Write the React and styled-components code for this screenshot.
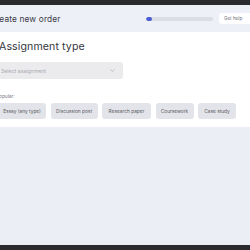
import React from "react";
import styled, { createGlobalStyle } from "styled-components";

const Global = createGlobalStyle`
  html, body { margin: 0; padding: 0; background: #eceef6; }
  body { font-family: Inter, "Noto Sans", Arial, sans-serif; overflow: hidden; }
  * { box-sizing: border-box; }
`;

const Page = styled.div`
  width: 250px;
  height: 250px;
  display: flex;
  flex-direction: column;
  overflow: hidden;
  background: #eceef6;
`;

const DarkBar = styled.div`
  height: ${(p) => p.$h}px;
  background: #2b2b2d;
  flex: none;
`;

const Header = styled.header`
  height: 27px;
  flex: none;
  background: #eef0f8;
  display: flex;
  align-items: center;
`;

const Title = styled.h1`
  margin: 0 0 0 -10px;
  font-size: 8.3px;
  font-weight: 400;
  color: #3a3b45;
  white-space: nowrap;
  flex: 1;
  letter-spacing: 0.15px;
`;

const Progress = styled.div`
  width: 67px;
  height: 4px;
  border-radius: 2px;
  background: #dcdde3;
  overflow: hidden;
  flex: none;
`;

const ProgressFill = styled.div`
  height: 100%;
  background: #4b5bd6;
  border-radius: 2px;
`;

const HelpButton = styled.button`
  margin-left: 6px;
  margin-right: -6px;
  width: 37px;
  height: 11px;
  border: none;
  border-radius: 3px;
  background: #ffffff;
  color: #6f7078;
  font-family: inherit;
  font-size: 4.6px;
  padding: 0 0 0 5px;
  text-align: left;
  flex: none;
`;

const Main = styled.main`
  background: #ffffff;
  height: 95px;
  flex: none;
  padding: 8px 0 0 0;
  margin-left: -2px;
  display: flex;
  flex-direction: column;
`;

const Heading = styled.h2`
  margin: 0 0 0 1px;
  font-size: 10.6px;
  line-height: 14px;
  font-weight: 400;
  color: #34353d;
  white-space: nowrap;
  letter-spacing: 0.1px;
`;

const Select = styled.div`
  margin-top: 8px;
  width: 125px;
  height: 17px;
  border-radius: 3px;
  background: #ebebed;
  display: flex;
  align-items: center;
  justify-content: space-between;
  padding: 0 8px 0 3px;
  color: #a9aab1;
  font-size: 5.2px;
`;

const Label = styled.div`
  margin: 14px 0 0 -2px;
  font-size: 4.8px;
  color: #777880;
`;

const Chips = styled.div`
  display: flex;
  gap: 4.5px;
  margin-top: 4px;
`;

const Chip = styled.div`
  height: 16px;
  padding: 0 4px;
  width: ${(p) => p.$w}px;
  border-radius: 3px;
  background: #e3e4e9;
  color: #5a5b63;
  font-size: 4.8px;
  display: flex;
  align-items: center;
  justify-content: center;
  white-space: nowrap;
  flex: none;
`;

const Lower = styled.div`
  flex: 1;
  background: #eceef6;
`;

const Chevron = () => (
  <svg width="5" height="3" viewBox="0 0 5 3" fill="none">
    <path d="M0.5 0.5 L2.5 2.5 L4.5 0.5" stroke="#a0a1a8" strokeWidth="0.6" />
  </svg>
);

const chips = [
  ["Essay (any type)", 48],
  ["Discussion post", 47],
  ["Research paper", 49],
  ["Coursework", 38],
  ["Case study", 38],
];

export default function App() {
  return (
    <>
      <Global />
      <Page>
        <DarkBar $h={5} />
        <Header>
          <Title>Create new order</Title>
          <Progress>
            <ProgressFill style={{ width: "9%" }} />
          </Progress>
          <HelpButton>Get help</HelpButton>
        </Header>
        <Main>
          <Heading>Assignment type</Heading>
          <Select>
            <span>Select assignment</span>
            <Chevron />
          </Select>
          <Label>Popular:</Label>
          <Chips>
            {chips.map(([t, w]) => (
              <Chip key={t} $w={w}>{t}</Chip>
            ))}
          </Chips>
        </Main>
        <Lower />
        <DarkBar $h={5} />
      </Page>
    </>
  );
}
